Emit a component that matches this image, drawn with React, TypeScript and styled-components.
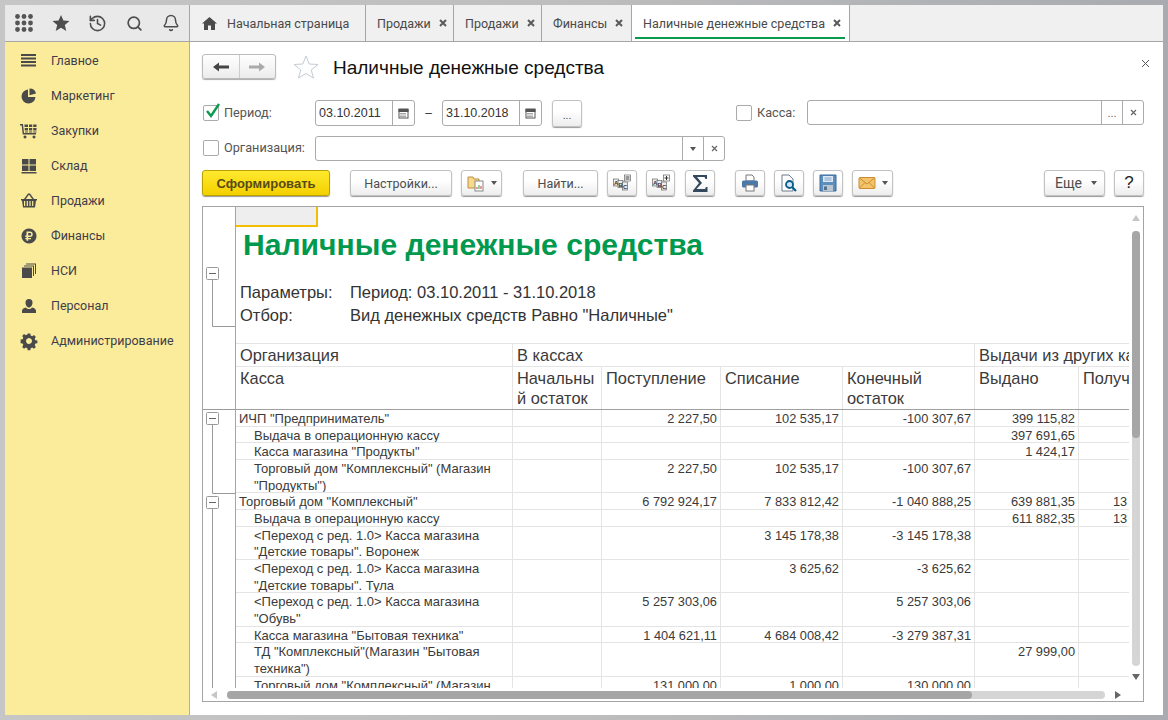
import React from "react";
import styled, { createGlobalStyle } from "styled-components";
import { History, Search, Bell } from "lucide-react";

const Global = createGlobalStyle`
  html, body { margin: 0; padding: 0; height: 100%; background: #fff; }
  * { box-sizing: border-box; }
  #root { height: 100%; }
`;

const Shell = styled.div`
  width: 1168px; height: 720px; padding: 5px; overflow: hidden;
  display: flex; flex-direction: column;
  background: linear-gradient(90deg, #c6c6c6 0%, #bdbdbd 50%, #a9abb0 100%);
  font-family: "Liberation Sans", Arial, sans-serif;
`;
const TopBar = styled.div`
  height: 37px; display: flex; flex: none; background: #f0f0f0; border-bottom: 1px solid #a6a6a6;
`;
const QuickBar = styled.div`
  width: 185px; flex: none; display: flex; align-items: center; padding-left: 1px;
  background: #e9e9e9; border-right: 1px solid #a6a6a6; color: #4d4d4d;
`;
const QuickBtn = styled.div`
  width: 37px; height: 36px; display: flex; align-items: center; justify-content: center;
`;
const Tab = styled.div<{ $w: number; $active?: boolean }>`
  width: ${(p) => p.$w}px; height: 36px; flex: none; position: relative;
  display: flex; align-items: center; padding-left: 11px; gap: 8px;
  border-right: 1px solid #a6a6a6;
  background: ${(p) => (p.$active ? "#fff" : "transparent")};
  font: 12.5px "Roboto", sans-serif; color: #4a4a4a; white-space: nowrap;
  ${(p) => p.$active && `&::after { content: ""; position: absolute; left: 3px; right: 4px; bottom: 2px; height: 2px; background: #0a9a4e; }`}
`;
const HomeTab = styled(Tab)`padding-left: 12px; gap: 10px;`;
const TabClose = styled.svg`width: 8px; height: 8px; flex: none; margin-top: -1px;`;
const Body = styled.div`flex: 1; display: flex; min-height: 0; background: #fff;`;
const Sidebar = styled.nav`
  width: 185px; flex: none; background: #fbec9c; border-right: 1px solid #c4b455; padding-top: 1px;
`;
const SideItem = styled.div`
  height: 35px; display: flex; align-items: center; padding-left: 14px; gap: 12px;
  font: 12.5px "Roboto", sans-serif; color: #3f3d4a; white-space: nowrap;
`;
const SideIcon = styled.svg`width: 20px; height: 20px; flex: none; fill: #4a4a4a;`;
const Main = styled.main`
  flex: 1; min-width: 0; padding: 12px 19px 13px 12px; display: flex; flex-direction: column; position: relative;
`;
const NavRow = styled.div`height: 25px; margin-bottom: 21px; display: flex; align-items: center; flex: none;`;
const NavGroup = styled.div`
  width: 74px; height: 25px; display: flex; border: 1px solid #bbb; border-radius: 3px;
  background: linear-gradient(#fff, #ececec); box-shadow: 0 1px 1px #aaa;
`;
const NavBtn = styled.div<{ $last?: boolean }>`
  flex: 1; display: flex; align-items: center; justify-content: center;
  border-right: ${(p) => (p.$last ? "none" : "1px solid #ccc")};
`;
const TitleText = styled.h1`
  margin: 2px 0 0 14px; font: 19px "Liberation Sans", sans-serif; color: #111; font-weight: 400; white-space: nowrap;
`;
const StarIcon = styled.svg`width: 26px; height: 24px; margin-left: 17px; flex: none;`;
const CloseX = styled.svg`position: absolute; top: 17px; right: 13px; width: 9px; height: 9px;`;
const FilterRow = styled.div<{ $h: number }>`
  height: ${(p) => p.$h}px; margin-bottom: 9px; display: flex; align-items: flex-start; flex: none;
`;
const Check = styled.div<{ $top?: number; $left?: number }>`
  width: 16px; height: 16px; margin: ${(p) => p.$top ?? 5}px 0 0 ${(p) => p.$left ?? 1}px; flex: none; position: relative;
  border: 1px solid #aaa; border-radius: 2px; background: #fff;
`;
const CheckMark = styled.svg`position: absolute; left: 1px; top: -4px; width: 17px; height: 17px;`;
const Label = styled.label<{ $w: number; $top?: number }>`
  width: ${(p) => p.$w}px; margin-left: 5px; padding-top: ${(p) => p.$top ?? 5}px; flex: none;
  font: 12.7px/16px "Roboto", sans-serif; color: #555; white-space: nowrap;
`;
const Field = styled.div<{ $w?: number; $h: number }>`
  ${(p) => (p.$w ? `width: ${p.$w}px; flex: none;` : "flex: 1;")}
  height: ${(p) => p.$h}px; display: flex; align-items: center;
  border: 1px solid #ababab; border-radius: 3px; background: #fff;
`;
const FieldText = styled.span`
  flex: 1; padding-left: 3px; font: 12.5px "Liberation Sans", sans-serif; color: #333;
`;
const FieldBtn = styled.span<{ $w: number }>`
  width: ${(p) => p.$w}px; height: 100%; flex: none; display: flex; align-items: center; justify-content: center;
  border-left: 1px solid #ababab; font: 11px "Liberation Sans", sans-serif; color: #666;
`;
const Dash = styled.span`
  width: 27px; flex: none; text-align: center; padding-top: 6px; font: 12px "Liberation Sans", sans-serif; color: #333;
`;
const Button = styled.button<{ $w: number }>`
  width: ${(p) => p.$w}px; height: 26px; flex: none; padding: 0; margin: 0;
  display: inline-flex; align-items: center; justify-content: center; gap: 6px;
  border: 1px solid #c2c2c2; border-radius: 3px; background: linear-gradient(#fff 40%, #ededed);
  box-shadow: 0 1px 1px #999;
  font: 12.5px "Roboto", sans-serif; color: #4d4d4d; white-space: nowrap;
`;
const DotsBtn = styled(Button)`height: 27px; margin-left: 10px; font-size: 11px; padding-top: 4px;`;
const PrimaryBtn = styled(Button)`
  background: linear-gradient(#ffe92e, #f4d000); border-color: #b9a100;
  font: bold 13px "Liberation Sans", sans-serif; color: #5a4a14;
`;
const MoreBtn = styled(Button)`font-size: 14px; gap: 9px; padding-left: 3px;`;
const HelpBtn = styled(Button)`font: 17px "Liberation Sans", sans-serif; color: #222;`;
const SigmaBtn = styled(Button)`margin-left: 1px;`;
const Toolbar = styled.div`height: 26px; margin-bottom: 10px; display: flex; gap: 20px; flex: none;`;
const ToolGroup = styled.div`display: flex; gap: 9px;`;
const FindGroup = styled(ToolGroup)`margin-left: 1px;`;
const PushRight = styled(ToolGroup)`margin-left: auto;`;
const Caret = styled.span`
  width: 0; height: 0; border: 3px solid transparent; border-top: 4px solid #555; border-bottom: 0;
`;
const Report = styled.section`
  flex: 1; min-height: 0; position: relative; border: 1px solid #a4a4a4; background: #fff; overflow: hidden;
`;
const ReportBody = styled.div`height: 481px; display: flex;`;
const Gutter = styled.svg`width: 33px; height: 481px; flex: none; border-right: 1px solid #a4a4a4;`;
const Sheet = styled.div`flex: 1; min-width: 0; overflow: hidden; margin-right: 14px;`;
const Corner = styled.div`
  width: 82px; height: 20px; background: #eeeeee; border-right: 2px solid #f4bd00; border-bottom: 2px solid #f4bd00;
`;
const Heading = styled.div`
  height: 36px; padding-left: 7px; font: bold 30.1px/36px "Liberation Sans", sans-serif; color: #00994d; white-space: nowrap;
`;
const Params = styled.div`margin-top: 18px; height: 62px; display: flex; flex-direction: column;`;
const ParamRow = styled.div`
  height: 23px; display: flex; padding-left: 4px; font: 16.5px/23px "Liberation Sans", sans-serif; color: #333; white-space: nowrap;
`;
const ParamKey = styled.span`width: 110px; flex: none;`;
const GRID = "277px 89px 119px 122px 132px 104px 95px";
const Rows = styled.div`width: 938px; display: flex; flex-direction: column;`;
const HeadRow = styled.div<{ $h: number; $top?: boolean; $heavy?: boolean }>`
  height: ${(p) => p.$h}px; display: grid; grid-template-columns: ${GRID};
  ${(p) => (p.$top ? "border-top: 1px solid #e4e4e4;" : "")}
  border-bottom: 1px solid ${(p) => (p.$heavy ? "#a0a0a0" : "#e4e4e4")};
`;
const HeadCell = styled.div<{ $span?: number }>`
  grid-column: span ${(p) => p.$span ?? 1}; padding: 1px 0 0 4px; border-right: 1px solid #e4e4e4;
  font: 16.4px/20px "Liberation Sans", sans-serif; color: #3a3a3a; white-space: nowrap; overflow: hidden;
`;
const DataRow = styled.div<{ $lines: number }>`
  height: ${(p) => p.$lines * 16.67}px; display: grid; grid-template-columns: ${GRID};
  border-bottom: 1px solid #e4e4e4;
`;
const NameCell = styled.div<{ $level: number }>`
  padding: 1px 0 0 ${(p) => (p.$level ? 18 : 3)}px; border-right: 1px solid #e4e4e4;
  font: 13px/16.67px "Liberation Sans", sans-serif; color: #3a3a3a; white-space: nowrap; overflow: hidden;
`;
const NumCell = styled.div`
  padding: 1px 3px 0 0; text-align: right; border-right: 1px solid #e4e4e4;
  font: 12.8px/16.67px "Liberation Sans", sans-serif; color: #3a3a3a; white-space: nowrap; overflow: hidden;
`;
const ClipCell = styled(NumCell)`text-align: left; padding: 1px 0 0 34px;`;
const VTrack = styled.div`
  position: absolute; left: 929px; top: 24px; width: 8px; height: 435px; border-radius: 4px; background: #d5d5d5;
`;
const VThumb = styled.div`height: 207px; border-radius: 4px; background: #a6a6a6;`;
const HTrack = styled.div`
  position: absolute; left: 24px; top: 484px; width: 878px; height: 8px; border-radius: 4px; background: #d5d5d5;
`;
const HThumb = styled.div`width: 745px; height: 8px; border-radius: 4px; background: #a6a6a6;`;
const Arrow = styled.svg<{ $x: number; $y: number }>`
  position: absolute; left: ${(p) => p.$x}px; top: ${(p) => p.$y}px; width: 8px; height: 8px;
`;

const Tri = ({ x, y, pts, color }: { x: number; y: number; pts: string; color: string }) => (
  <Arrow $x={x} $y={y} viewBox="0 0 8 8"><polygon points={pts} fill={color} /></Arrow>
);
const CloseMark = () => (
  <TabClose viewBox="0 0 8 8" stroke="#5a5a5a" strokeWidth="2"><path d="M1 1l6 6M7 1L1 7" /></TabClose>
);
const Calendar = () => (
  <svg width="11" height="11" viewBox="0 0 11 11" fill="none" stroke="#555">
    <rect x="1" y="1.5" width="9" height="8.5" fill="#fff" />
    <rect x="1" y="1" width="9" height="2.5" fill="#555" />
    <path d="M2.5 5.5h6M2.5 7h6M2.5 8.5h6" strokeDasharray="1 1" />
  </svg>
);
const SmallX = () => (
  <svg width="7" height="7" viewBox="0 0 7 7" stroke="#666" strokeWidth="1.2"><path d="M1 1l5 5M6 1L1 6" /></svg>
);
const GridIcon = () => (
  <svg width="18" height="18" viewBox="0 0 18 18" fill="#555">
    {[2.5, 9, 15.5].flatMap((y) => [2.5, 9, 15.5].map((x) => <circle key={`${x}-${y}`} cx={x} cy={y} r="2.4" />))}
  </svg>
);
const AbcIcon = ({ sign }: { sign: string }) => (
  <svg width="18" height="18" viewBox="0 0 18 18">
    <g fill="#eee" stroke="#666" strokeWidth="0.7">
      <rect x="0.5" y="5" width="5" height="7" /><rect x="5" y="6.500" width="5" height="7" /><rect x="9.500" y="8" width="5" height="8" />
    </g>
    <g fontFamily="Liberation Sans" fontSize="6" fontWeight="700" fill="#333">
      <text x="1" y="11">A</text><text x="5.500" y="12.500">B</text><text x="10" y="14.500">C</text>
    </g>
    <rect x="11.500" y="1" width="6" height="6" fill="#fff" stroke="#666" strokeWidth="0.7" />
    <path d={sign === "+" ? "M12.500 4h4M14.500 2v4" : "M12.500 3h4M12.500 5h4"} stroke="#333" strokeWidth="1" />
  </svg>
);

const sideIcons: Record<string, React.ReactNode> = {
  "Главное": <path d="M2 3h15v2H2zM2 6.5h15v2H2zM2 10h15v2H2zM2 13.5h15v2H2z" />,
  "Маркетинг": <path d="M9 3.5A7 7 0 1 0 16.5 11H9zM10.5 2.500A6.500 6.500 0 0 1 17 7.500l-6.500 1.800z" />,
  "Закупки": <path d="M1 3h3l1 9h12v1.500H3.700L2.700 4.500H1zM5.500 3.500h3.500v2.500H5.500zM10 3.500h3.200v2.500H10zM14.200 3.500h3.300v2.500h-3.300zM5.700 7h3.300v2.500H5.700zM10 7h3.200v2.500H10zM14.200 7h3.300v2.500h-3.300zM6 10.500h3v1H6zM10 10.500h3.200v1H10zM14.200 10.500h3.300v1h-3.300zM6 14.500a1.500 1.500 0 1 0 .01 0zM15 14.500a1.500 1.500 0 1 0 .01 0z" />,
  "Склад": <path d="M3 3h6.500v5.500H3zM10.500 3H17v5.500h-6.500zM3 9.500h6.500V15H3zM10.500 9.500H17V15h-6.500zM2.500 16h15v1.500h-15z" />,
  "Продажи": <path fillRule="evenodd" d="M2 8h16v1.500h-1l-1 7H4l-1-7H2zM5 10v5h1.200v-5zM7.700 10v5h1.200v-5zM10.400 10v5h1.200v-5zM13.100 10v5h1.200v-5zM5 8l4-5.500h2L15 8h-1.800L10.300 4h-.6L6.800 8z" />,
  "Финансы": <path fillRule="evenodd" d="M10 2.500a7.500 7.500 0 1 0 .01 0zM7.500 5.500H11a2.700 2.700 0 0 1 0 5.400H9.200v1h2.800v1.300H9.200v1.600H7.500v-1.600H6.300v-1.300h1.200v-1H6.300V9.500h1.200zM9.200 7v2.500H11a1.250 1.250 0 0 0 0-2.500z" />,
  "НСИ": <path d="M3 6.500h10V17H3zM5 4.500h10V15h-1V5.500H5zM7 2.500h10V13h-1V3.500H7z" />,
  "Персонал": <path d="M10 3a3.500 3.500 0 0 1 3.500 3.500c0 2.500-1.500 5-3.500 5s-3.500-2.500-3.500-5A3.500 3.500 0 0 1 10 3zM7 11.500c.8 1 1.800 1.500 3 1.500s2.200-.5 3-1.500c2.500.6 4 1.700 4 3.300V17H3v-2.200c0-1.600 1.500-2.700 4-3.300z" />,
  "Администрирование": <path fillRule="evenodd" d="M8.700 2.500h2.600l.4 2 1.500.7 1.800-1.100 1.800 1.800-1.100 1.800.7 1.500 2 .4v2.600l-2 .4-.7 1.500 1.100 1.800-1.800 1.800-1.800-1.100-1.500.7-.4 2H8.700l-.4-2-1.500-.7-1.800 1.100-1.800-1.800 1.100-1.800-.7-1.500-2-.4V8.600l2-.4.7-1.500L3.200 4.900 5 3.100l1.800 1.100 1.500-.7zM10 7a3 3 0 1 0 .01 0z" />,
};

type Rec = { name: React.ReactNode; level: number; lines: number; v: (string | null)[]; clip?: string };
const rows: Rec[] = [
  { name: 'ИЧП "Предприниматель"', level: 0, lines: 1, v: [null, "2 227,50", "102 535,17", "-100 307,67", "399 115,82"] },
  { name: "Выдача в операционную кассу", level: 1, lines: 1, v: [null, null, null, null, "397 691,65"] },
  { name: 'Касса магазина "Продукты"', level: 1, lines: 1, v: [null, null, null, null, "1 424,17"] },
  { name: <>Торговый дом "Комплексный" (Магазин<br />"Продукты")</>, level: 1, lines: 2, v: [null, "2 227,50", "102 535,17", "-100 307,67", null] },
  { name: 'Торговый дом "Комплексный"', level: 0, lines: 1, v: [null, "6 792 924,17", "7 833 812,42", "-1 040 888,25", "639 881,35"], clip: "13" },
  { name: "Выдача в операционную кассу", level: 1, lines: 1, v: [null, null, null, null, "611 882,35"], clip: "13" },
  { name: <>&lt;Переход с ред. 1.0&gt; Касса магазина<br />"Детские товары". Воронеж</>, level: 1, lines: 2, v: [null, null, "3 145 178,38", "-3 145 178,38", null] },
  { name: <>&lt;Переход с ред. 1.0&gt; Касса магазина<br />"Детские товары". Тула</>, level: 1, lines: 2, v: [null, null, "3 625,62", "-3 625,62", null] },
  { name: <>&lt;Переход с ред. 1.0&gt; Касса магазина<br />"Обувь"</>, level: 1, lines: 2, v: [null, "5 257 303,06", null, "5 257 303,06", null] },
  { name: 'Касса магазина "Бытовая техника"', level: 1, lines: 1, v: [null, "1 404 621,11", "4 684 008,42", "-3 279 387,31", null] },
  { name: <>ТД "Комплексный"(Магазин "Бытовая<br />техника")</>, level: 1, lines: 2, v: [null, null, null, null, "27 999,00"] },
  { name: 'Торговый дом "Комплексный" (Магазин', level: 1, lines: 2, v: [null, "131 000,00", "1 000,00", "130 000,00", null] },
];

const sideItems = ["Главное", "Маркетинг", "Закупки", "Склад", "Продажи", "Финансы", "НСИ", "Персонал", "Администрирование"];

export default function App() {
  return (
    <Shell>
      <Global />
      <TopBar>
        <QuickBar>
          <QuickBtn><GridIcon /></QuickBtn>
          <QuickBtn>
            <svg width="18" height="18" viewBox="0 0 18 18" fill="#4d4d4d"><polygon points="9,1 11.400,6.600 17.500,7.100 12.800,11 14.300,17 9,13.800 3.700,17 5.200,11 .5,7.100 6.600,6.600" /></svg>
          </QuickBtn>
          <QuickBtn><History size={19} strokeWidth={2} /></QuickBtn>
          <QuickBtn><Search size={17} strokeWidth={2.4} /></QuickBtn>
          <QuickBtn><Bell size={18} strokeWidth={2} /></QuickBtn>
        </QuickBar>
        <HomeTab $w={176}>
          <svg width="15" height="13" viewBox="0 0 15 13" fill="#4a4a4a"><path d="M7.500 0L15 6.500h-2V13H9V8.500H6V13H2V6.500H0z" /></svg>
          Начальная страница
        </HomeTab>
        <Tab $w={88}>Продажи <CloseMark /></Tab>
        <Tab $w={88}>Продажи <CloseMark /></Tab>
        <Tab $w={90}>Финансы <CloseMark /></Tab>
        <Tab $w={218} $active>Наличные денежные средства <CloseMark /></Tab>
      </TopBar>
      <Body>
        <Sidebar>
          {sideItems.map((s) => (
            <SideItem key={s}><SideIcon viewBox="0 0 20 20">{sideIcons[s]}</SideIcon>{s}</SideItem>
          ))}
        </Sidebar>
        <Main>
          <CloseX viewBox="0 0 9 9" stroke="#555"><path d="M1 1l7 7M8 1L1 8" /></CloseX>
          <NavRow>
            <NavGroup>
              <NavBtn>
                <svg width="16" height="10" viewBox="0 0 16 10" fill="#444"><path d="M0 5l6-4.500V3.500h10v3H6v3z" /></svg>
              </NavBtn>
              <NavBtn $last>
                <svg width="16" height="10" viewBox="0 0 16 10" fill="#aaa"><path d="M16 5l-6-4.500V3.500H0v3h10v3z" /></svg>
              </NavBtn>
            </NavGroup>
            <StarIcon viewBox="0 0 26 24" fill="#fff" stroke="#c4ccd4"><polygon points="13,1 16.200,9 25,9.500 18.200,15 20.500,23 13,18.500 5.500,23 7.800,15 1,9.500 9.800,9" /></StarIcon>
            <TitleText>Наличные денежные средства</TitleText>
          </NavRow>
          <FilterRow $h={27}>
            <Check>
              <CheckMark viewBox="0 0 17 17" fill="none" stroke="#0a9a4e" strokeWidth="2.4"><path d="M2 9l4 5 8-12" /></CheckMark>
            </Check>
            <Label $w={91}>Период:</Label>
            <Field $w={100} $h={26}><FieldText>03.10.2011</FieldText><FieldBtn $w={22}><Calendar /></FieldBtn></Field>
            <Dash>–</Dash>
            <Field $w={100} $h={26}><FieldText>31.10.2018</FieldText><FieldBtn $w={22}><Calendar /></FieldBtn></Field>
            <DotsBtn $w={30}>...</DotsBtn>
            <Check $left={154} />
            <Label $w={50}>Касса:</Label>
            <Field $h={25}><FieldText /><FieldBtn $w={21}>...</FieldBtn><FieldBtn $w={21}><SmallX /></FieldBtn></Field>
          </FilterRow>
          <FilterRow $h={25}>
            <Check $top={4} />
            <Label $w={91} $top={4}>Организация:</Label>
            <Field $w={410} $h={25}><FieldText /><FieldBtn $w={21}><Caret /></FieldBtn><FieldBtn $w={21}><SmallX /></FieldBtn></Field>
          </FilterRow>
          <Toolbar>
            <PrimaryBtn $w={128}>Сформировать</PrimaryBtn>
            <ToolGroup>
              <Button $w={102}>Настройки...</Button>
              <Button $w={41}>
                <svg width="18" height="18" viewBox="0 0 18 18">
                  <path d="M1 3h5l1 2h5v9H1z" fill="#f6d98a" stroke="#b89040" />
                  <rect x="8" y="7" width="8" height="10" fill="#fff" stroke="#888" />
                  <path d="M10 15v-2" stroke="#d33" /><path d="M12 15v-4" stroke="#3a3" /><path d="M14 15v-3" stroke="#d33" />
                </svg>
                <Caret />
              </Button>
            </ToolGroup>
            <FindGroup>
              <Button $w={75}>Найти...</Button>
              <Button $w={30}><AbcIcon sign="-" /></Button>
              <Button $w={29}><AbcIcon sign="+" /></Button>
              <SigmaBtn $w={30}>
                <svg width="16" height="18" viewBox="0 0 16 18" fill="#34495e"><path d="M1 1h14v4h-1.500l-1-2H5l5 6-5.500 6H13l1-2h1.500v5H1v-1.500L7 9 1 2.500z" /></svg>
              </SigmaBtn>
            </FindGroup>
            <ToolGroup>
              <Button $w={30}>
                <svg width="18" height="18" viewBox="0 0 18 18">
                  <path d="M5 1h6l2 2v4H5z" fill="#fff" stroke="#777" />
                  <rect x="1" y="6.500" width="16" height="7" rx="1.500" fill="#4a78a8" />
                  <rect x="5" y="11" width="8" height="6" fill="#fff" stroke="#777" />
                </svg>
              </Button>
              <Button $w={30}>
                <svg width="18" height="18" viewBox="0 0 18 18" fill="none">
                  <path d="M2 1h7l4 4v12H2z" fill="#fff" stroke="#6a7c8e" />
                  <circle cx="9.500" cy="10.500" r="3.500" fill="#cfe3f2" stroke="#0a5a8a" strokeWidth="1.800" />
                  <path d="M12 13l4 4" stroke="#0a5a8a" strokeWidth="2.200" />
                </svg>
              </Button>
              <Button $w={30}>
                <svg width="18" height="18" viewBox="0 0 18 18">
                  <path d="M1 1h16v16H1z" fill="#5b8fc0" stroke="#3a6a98" />
                  <rect x="4" y="2" width="10" height="6" fill="#dfe9f2" />
                  <path d="M5.500 4h7M5.500 6h7" stroke="#7fa3c6" />
                  <rect x="4" y="11" width="10" height="6" fill="#bcc6d0" />
                  <rect x="5" y="12.500" width="3" height="3.500" fill="#55708a" />
                </svg>
              </Button>
              <Button $w={41}>
                <svg width="18" height="14" viewBox="0 0 18 14">
                  <rect x="1" y="1.500" width="16" height="11" rx="1" fill="#f4c46a" stroke="#cc8c30" />
                  <path d="M1.500 2L9 8l7.500-6M1.500 12L7 6.500M16.500 12L11 6.500" fill="none" stroke="#cc8c30" />
                </svg>
                <Caret />
              </Button>
            </ToolGroup>
            <PushRight>
              <MoreBtn $w={61}>Еще <Caret /></MoreBtn>
              <HelpBtn $w={30}>?</HelpBtn>
            </PushRight>
          </Toolbar>
          <Report>
            <ReportBody>
              <Gutter viewBox="0 0 32 481" fill="none" stroke="#9a9a9a">
                <path d="M9.500 71.500V119.500H32" />
                <rect x="3.500" y="60.500" width="12" height="12" rx="1" fill="#fff" />
                <path d="M6 66.500h7" stroke="#666" />
                <path d="M0 202.500H32" />
                <path d="M9.500 216.500V286.500H32" />
                <rect x="3.500" y="205.500" width="12" height="12" rx="1" fill="#fff" />
                <path d="M6 211.500h7" stroke="#666" />
                <path d="M9.500 300V481" />
                <rect x="3.500" y="289.500" width="12" height="12" rx="1" fill="#fff" />
                <path d="M6 295.500h7" stroke="#666" />
              </Gutter>
              <Sheet>
                <Corner />
                <Heading>Наличные денежные средства</Heading>
                <Params>
                  <ParamRow><ParamKey>Параметры:</ParamKey>Период: 03.10.2011 - 31.10.2018</ParamRow>
                  <ParamRow><ParamKey>Отбор:</ParamKey>Вид денежных средств Равно "Наличные"</ParamRow>
                </Params>
                <Rows>
                  <HeadRow $h={24} $top>
                    <HeadCell>Организация</HeadCell>
                    <HeadCell $span={4}>В кассах</HeadCell>
                    <HeadCell $span={2}>Выдачи из других касс</HeadCell>
                  </HeadRow>
                  <HeadRow $h={43} $heavy>
                    <HeadCell>Касса</HeadCell>
                    <HeadCell>Начальны<br />й остаток</HeadCell>
                    <HeadCell>Поступление</HeadCell>
                    <HeadCell>Списание</HeadCell>
                    <HeadCell>Конечный<br />остаток</HeadCell>
                    <HeadCell>Выдано</HeadCell>
                    <HeadCell>Получено</HeadCell>
                  </HeadRow>
                  {rows.map((r, i) => (
                    <DataRow key={i} $lines={r.lines}>
                      <NameCell $level={r.level}>{r.name}</NameCell>
                      {r.v.map((x, j) => <NumCell key={j}>{x}</NumCell>)}
                      <ClipCell>{r.clip}</ClipCell>
                    </DataRow>
                  ))}
                </Rows>
              </Sheet>
            </ReportBody>
            <Tri x={929} y={7} pts="4,1 8,7 0,7" color="#c6c6c6" />
            <VTrack><VThumb /></VTrack>
            <Tri x={929} y={466} pts="0,1 8,1 4,7" color="#666" />
            <Tri x={7} y={484} pts="7,0 7,8 1,4" color="#c6c6c6" />
            <HTrack><HThumb /></HTrack>
            <Tri x={911} y={484} pts="1,0 7,4 1,8" color="#666" />
          </Report>
        </Main>
      </Body>
    </Shell>
  );
}
